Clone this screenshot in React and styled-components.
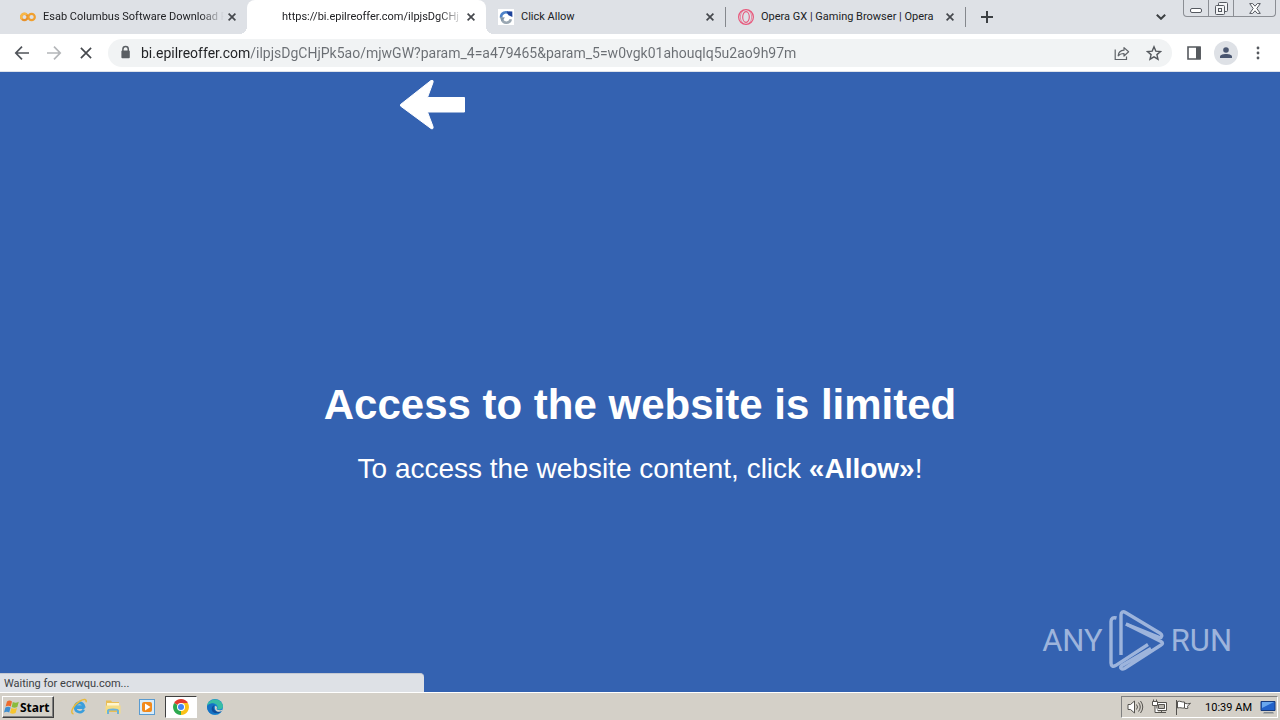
import React, { useState } from "react";
import styled, { createGlobalStyle } from "styled-components";

const GlobalStyle = createGlobalStyle`
  * {
    box-sizing: border-box;
  }

  body {
    margin: 0;
    font-family: Roboto, sans-serif;
    font-size: 11px;
    color: #202124;
  }

  button {
    font: inherit;
    color: inherit;
    padding: 0;
    border: none;
    background: none;
  }

  svg {
    display: block;
    flex: none;
  }
`;

const Screen = styled.div`
  display: flex;
  flex-direction: column;
  min-height: 100vh;
`;

// --- TAB STRIP ---

const TabStrip = styled.header`
  display: flex;
  align-items: flex-start;
  height: 34px;
  padding: 0 4px 0 8px;
  background: #dee1e6;
`;

const Tab = styled.div`
  position: relative;
  display: flex;
  align-items: center;
  flex: 0 1 239px;
  min-width: 0;
  height: 34px;
  padding: 0 7px 0 12px;
  border-radius: 8px 8px 0 0;
  background: ${(props) => (props.$active ? "#ffffff" : "transparent")};

  /* Rounded feet that join the open tab to the toolbar */
  &::before,
  &::after {
    content: "";
    display: ${(props) => (props.$active ? "block" : "none")};
    position: absolute;
    bottom: 0;
    width: 8px;
    height: 8px;
  }

  &::before {
    right: 100%;
    background: radial-gradient(circle at 0 0, transparent 8px, #ffffff 8px);
  }

  &::after {
    left: 100%;
    background: radial-gradient(circle at 100% 0, transparent 8px, #ffffff 8px);
  }
`;

const TabButton = styled.button`
  display: flex;
  align-items: center;
  gap: 7px;
  flex: 1;
  min-width: 0;
  height: 34px;
`;

const TabIcon = styled.span`
  width: 16px;
  height: 16px;
  flex: none;
`;

const TabTitle = styled.span`
  flex: 1;
  overflow: hidden;
  white-space: nowrap;
  text-align: left;
  line-height: 16px;
  mask-image: ${(props) =>
    props.$fade ? "linear-gradient(to left, transparent, #000 24px)" : "none"};
`;

const IconButton = styled.button`
  display: grid;
  place-items: center;
  flex: none;
  width: ${(props) => props.$size || 16}px;
  height: ${(props) => props.$size || 16}px;
  border-radius: 50%;
  background: ${(props) => props.$fill || "transparent"};
`;

const Divider = styled.span`
  width: 1px;
  height: 20px;
  margin-top: 7px;
  background: #85888d;
`;

const NewTab = styled(IconButton)`
  margin: 3px auto 0 7px;
`;

const TabSearch = styled(IconButton)`
  margin: 3px 8px 0 0;
`;

const WindowButtons = styled.div`
  display: flex;
  height: 17px;
  border: 1px solid #8b8e94;
  border-top: none;
  border-radius: 0 0 4px 4px;
`;

const WindowButton = styled.button`
  display: grid;
  place-items: center;
  width: ${(props) => props.$width}px;
  border-right: 1px solid #8b8e94;

  &:last-child {
    border-right: none;
  }
`;

// --- TOOLBAR ---

const Toolbar = styled.nav`
  display: flex;
  align-items: center;
  height: 38px;
  padding: 0 10px;
  border-bottom: 1px solid #dfe3ea;
  background: #ffffff;
`;

const NavGroup = styled.div`
  display: flex;
  gap: 8px;
  margin-right: 10px;
`;

const AddressBar = styled.label`
  display: flex;
  align-items: center;
  flex: 1;
  gap: 8px;
  height: 28px;
  padding: 0 6px 0 10px;
  border-radius: 14px;
  background: #f1f3f4;
`;

/* The host name is dark, the rest of the address is grey */
const AddressInput = styled.input`
  flex: 1;
  min-width: 0;
  padding: 0;
  border: none;
  outline: none;
  font: 14px Roboto, sans-serif;
  color: transparent;
  background: linear-gradient(90deg, #202124 109px, #6a6e73 109px);
  background-clip: text;
`;

const ToolGroup = styled.div`
  display: flex;
  gap: 8px;
  margin-left: 10px;
`;

// --- PAGE ---

const Page = styled.main`
  position: relative;
  flex: 1;
  display: flex;
  flex-direction: column;
  color: #ffffff;
  background: #3462b1;
  font-family: "Liberation Sans", sans-serif;
`;

const ArrowRow = styled.div`
  padding: 8px 0 0 400px;
`;

const Message = styled.section`
  flex: 1;
  display: flex;
  flex-direction: column;
  align-items: center;
  justify-content: center;
  gap: 24px;
  padding-top: 41px;
  text-align: center;
`;

const Heading = styled.h1`
  margin: 0;
  font-size: 42px;
  line-height: 48px;
`;

const Lead = styled.p`
  margin: 0;
  font-size: 28px;
  line-height: 32px;
`;

const StatusBubble = styled.div`
  position: absolute;
  left: 0;
  bottom: 0;
  width: 424px;
  height: 19px;
  padding-left: 4px;
  border-top: 1px solid #c3c8d2;
  border-radius: 0 4px 0 0;
  font: 11px/20px Roboto, sans-serif;
  color: #3c4043;
  background: #dee1e6;
`;

const Watermark = styled.div`
  position: absolute;
  right: 48px;
  bottom: 20px;
  display: flex;
  align-items: center;
  gap: 6px;
  font: 31px/62px Roboto, sans-serif;
  color: #9db4dc;
`;

// --- TASKBAR ---

const Taskbar = styled.footer`
  display: flex;
  align-items: center;
  height: 28px;
  padding: 1px 2px 0;
  border-top: 1px solid #ffffff;
  background: #d4d0c8;
`;

const StartButton = styled.button`
  display: flex;
  align-items: center;
  width: 52px;
  height: 22px;
  padding-left: 1px;
  border: 1px solid;
  border-color: #ffffff #404040 #404040 #ffffff;
  box-shadow: inset -1px -1px #808080;
  font: 700 12px "Noto Sans", sans-serif;
  color: #000000;
`;

const TaskList = styled.div`
  display: flex;
  gap: 2px;
  flex: 1;
  margin-left: 9px;
`;

const TaskButton = styled.button`
  display: grid;
  place-items: center;
  width: 32px;
  height: 22px;
  border: 1px solid;
  border-color: ${(props) =>
    props.$active ? "#404040 #ffffff #ffffff #404040" : "transparent"};
  background: ${(props) => (props.$active ? "#ffffff" : "none")};
`;

const Tray = styled.div`
  display: flex;
  align-items: center;
  gap: 7px;
  height: 22px;
  padding: 0 1px 0 5px;
  border: 1px solid;
  border-color: #808080 #ffffff #ffffff #808080;
  color: #000000;
`;

const Clock = styled.time`
  margin: 0 1px 0 6px;
`;

// --- ICONS ---

const Cross = ({ size = 8, width = 1.7 }) => (
  <svg width={size} height={size} viewBox="0 0 8 8">
    <path d="M.6.6 7.4 7.4M7.4.6.6 7.4" stroke="#45484d" strokeWidth={width} />
  </svg>
);

const ColabIcon = () => (
  <svg width="16" height="16" viewBox="0 0 16 16" fill="none" strokeWidth="2.2">
    <circle cx="4.4" cy="8" r="3.2" stroke="#e8912b" />
    <circle cx="11.6" cy="8" r="3.2" stroke="#f0a030" />
    <path d="M6.7 5.7A3.2 3.2 0 0 0 2 10.2" stroke="#f8b848" />
  </svg>
);

const SpinIcon = () => (
  <svg width="16" height="16" viewBox="0 0 16 16" fill="none">
    <path d="M0 0h16v16H0z" fill="#fff" />
    <path d="M3 8.5C3 3.5 8 2 11 4.5" stroke="#4f83c9" strokeWidth="2.6" />
    <path d="M8.5 2.2 14.3 2.6 14.4 8 10.5 6.2z" fill="#1d439c" />
    <path d="M4 10a4.5 4.5 0 0 0 8.8.3" stroke="#9aa7b2" strokeWidth="2.6" />
    <path d="m1.8 8 5.2.4-3.4 4z" fill="#8296aa" />
  </svg>
);

const OperaIcon = () => (
  <svg width="16" height="16" viewBox="0 0 16 16" fill="none" stroke="#e8577b">
    <circle cx="8" cy="8" r="7.4" strokeWidth="1.2" />
    <ellipse cx="8" cy="8" rx="3.3" ry="5.4" strokeWidth="1.1" />
    <path d="M5.8 1.4C1.2 3.8 1.2 12.2 5.8 14.6M10.2 1.4c4.6 2.4 4.6 10.8 0 13.2" opacity=".6" />
  </svg>
);

const ArrowIcon = ({ flip, color }) => (
  <svg width="16" height="16" viewBox="0 0 16 16" fill="none" stroke={color} strokeWidth="1.7">
    <path d={flip ? "M1 8h13M8 1.6 14.2 8 8 14.4" : "M15 8H2M8 1.6 1.8 8 8 14.4"} />
  </svg>
);

const LockIcon = () => (
  <svg width="15" height="16" viewBox="0 0 15 16">
    <path d="M4.9 6V4.2a2.7 2.7 0 0 1 5.4 0V6" fill="none" stroke="#5a5e63" strokeWidth="1.5" />
    <rect x="3.4" y="5.6" width="8.4" height="7.6" rx="1" fill="#5a5e63" />
  </svg>
);

const ShareIcon = () => (
  <svg width="16" height="16" viewBox="0 0 16 16" fill="none" stroke="#5f6368" strokeWidth="1.2">
    <path d="M1.2 4.5v10h11.3v-3" />
    <path d="M4.2 10.8c.3-3.6 2.3-5.4 5.8-5.6V2.6l4.6 4.2L10 11V8.5c-2.7 0-4.5.6-5.8 2.3z" strokeLinejoin="round" />
  </svg>
);

const StarIcon = () => (
  <svg width="16" height="16" viewBox="0 0 16 16">
    <path
      d="m8 1.8 1.8 4.3 4.7.4-3.6 3.1 1.1 4.6L8 11.8l-4 2.4 1.1-4.6L1.5 6.5l4.7-.4z"
      fill="none"
      stroke="#55595e"
      strokeWidth="1.4"
    />
  </svg>
);

const PanelIcon = () => (
  <svg width="14" height="14" viewBox="0 0 14 14">
    <path d="M1 1h12v12H1z" fill="none" stroke="#55595e" strokeWidth="1.6" />
    <path d="M9 1h4.8v12H9z" fill="#55595e" />
  </svg>
);

const PersonIcon = () => (
  <svg width="14" height="14" viewBox="0 0 14 14" fill="#4a5670">
    <circle cx="7" cy="4" r="2.8" />
    <path d="M1 12v-1.2C1 8.8 4 8 7 8s6 .8 6 2.8V12z" />
  </svg>
);

const DotsIcon = () => (
  <svg width="4" height="14" viewBox="0 0 4 14" fill="#55595e">
    <circle cx="2" cy="2" r="1.4" />
    <circle cx="2" cy="7" r="1.4" />
    <circle cx="2" cy="12" r="1.4" />
  </svg>
);

const MinimizeIcon = () => (
  <svg width="12" height="12" viewBox="0 0 12 12">
    <rect x=".5" y="6.5" width="11" height="4" rx="1.5" fill="#fff" stroke="#555960" />
  </svg>
);

const RestoreIcon = () => (
  <svg width="13" height="13" viewBox="0 0 13 13" fill="#f3f4f6" stroke="#555960">
    <rect x="3.5" y=".5" width="9" height="9" rx="1" />
    <rect x=".5" y="3.5" width="9" height="9" rx="1" />
    <rect x="3.5" y="6.5" width="3" height="3" />
  </svg>
);

const CloseIcon = () => (
  <svg width="12" height="11" viewBox="0 0 12 11">
    <path
      d="M.7.6h3L6 3.2 8.3.6h3L7.8 5.5l3.5 4.9h-3L6 7.8l-2.3 2.6h-3l3.5-4.9z"
      fill="#fff"
      stroke="#555960"
    />
  </svg>
);

const BigArrow = () => (
  <svg width="66" height="52" viewBox="1 1 66 52">
    <path
      d="M1.5 25.5 32 1.5c1.5-1 2.5 0 2 2L28.5 18.5H65.5v14.5H28.5l5.5 14.5c.5 2-.5 3-2 2L1.5 27z"
      fill="#fff"
      stroke="#fff"
      strokeLinejoin="round"
    />
  </svg>
);

const PlayLogo = () => (
  <svg
    width="56"
    height="62"
    viewBox="0 0 56 62"
    fill="none"
    stroke="#9db4dc"
    strokeWidth="3.4"
    strokeLinejoin="round"
  >
    <path d="M7.5 8C4 7 2 8.5 2 11.5V53c0 3 2 4 4.5 2.6L39 34.5" />
    <path d="M12 45V5c0-3 2-4 4.5-2.5l35 21c2 1.5 1.5 4.5-1 4L17 14" />
    <path d="m17 14 35 17.500c2 1.200 2 2.300 0 3.500L15.500 58.500c-3 1.600-5-1-3-2.800L42 38.500" />
  </svg>
);

const WindowsLogo = () => (
  <svg width="16" height="16" viewBox="0 0 16 16">
    <path d="M3 2.5C5 1 6.5 1.5 8 2.5L6.8 7.5C5 6.5 3.5 6.5 1.6 7.5z" fill="#ed6b2d" />
    <path d="M8.8 3c2 1 3.7 1 6-.2L13.3 8c-2 1-3.7 1-5.6 0z" fill="#8abb3c" />
    <path d="M1.4 8.5c2-1 3.5-1 5.2 0L5.2 13.5C3.5 12.5 2 12.5 0 13.5z" fill="#3e8ed0" />
    <path d="M7.4 9c2 1 3.7 1 5.6 0l-1.4 5c-2 1-3.7 1-5.6 0z" fill="#f7c52f" />
  </svg>
);

const ExplorerIcon = () => (
  <svg width="18" height="18" viewBox="0 0 18 18" fill="none">
    <path d="M14.5 9.8H5.2a4.5 4.5 0 0 0 8.6 1.7M5 8.5a4.6 4.6 0 0 1 9 0z" stroke="#3a9edc" strokeWidth="2.6" />
    <path d="M3.5 16C-1 15 4 6.5 10 3c4-2.3 7-2 6 1.2" stroke="#e8b93c" strokeWidth="1.5" />
  </svg>
);

const FolderIcon = () => (
  <svg width="18" height="18" viewBox="0 0 18 18">
    <path d="M2 4V2.5h5l1 1.5h7v10H2z" fill="#e9bd55" />
    <path d="M3 5h12v3H3z" fill="#fff5cb" />
    <path d="M1.5 7.5h15v8h-3v-4h-9v4h-3z" fill="#f5dc83" />
    <path d="M4 16v-3.5c0-1.5 10-1.5 10 0V16" fill="none" stroke="#69b3dc" strokeWidth="2" />
  </svg>
);

const MediaIcon = () => (
  <svg width="18" height="18" viewBox="0 0 18 18">
    <rect x="1.5" y="1.5" width="15" height="15" fill="#d7ecfb" stroke="#5a9bd0" />
    <rect x="4" y="4" width="10" height="10" rx="2" fill="#f28a1b" />
    <path d="m7 5.5 5.5 3.5L7 12.5z" fill="#fff" />
  </svg>
);

const ChromeIcon = () => (
  <svg width="16" height="16" viewBox="0 0 16 16">
    <path d="M8 8 1.1 4A8 8 0 0 1 14.9 4z" fill="#e33b2e" />
    <path d="M8 8 14.9 4A8 8 0 0 1 8 16z" fill="#fbc116" />
    <path d="M8 8v8A8 8 0 0 1 1.1 4z" fill="#2da94f" />
    <path d="M8 4h6.9L8 16l3.5-6z" fill="#fbc116" />
    <circle cx="8" cy="8" r="4" fill="#fff" />
    <circle cx="8" cy="8" r="3" fill="#4285f4" />
  </svg>
);

const EdgeIcon = () => (
  <svg width="16" height="16" viewBox="0 0 16 16">
    <circle cx="8" cy="8" r="8" fill="#1684d0" />
    <path d="M0 7C1-1 14-2 16 7c0 3-3 4-6 3 2-3-1-6-4-5.5S1 6 0 7z" fill="#38bda5" />
    <path d="M0 7c3-4 8-3 8-1-3 1-4 6 0 9C3 16 0 12 0 7z" fill="#1672c4" />
    <path d="M8 6c-2.5 2-1.5 6 3 6.5 2 .2 3-.5 4-1-2.5 4-9 3.5-10 0C4 9 5.5 6.5 8 6z" fill="#104c99" />
    <path d="M8 7c2 0 2.5 1.5 1.5 3 1 1.5 5 1.5 6 .5L15 12c-4 2-8 0-7-5z" fill="#d4d0c8" />
  </svg>
);

const SpeakerIcon = () => (
  <svg width="17" height="16" viewBox="0 0 17 16" fill="none" stroke="#55534f">
    <path d="M1 5.5h2.5L7.5 2v12l-4-3.5H1z" fill="#fff" />
    <path d="M9.5 5.5q2 2.5 0 5M11.5 3.5q3.5 4.5 0 9M13.5 2q4.5 6 0 12" />
  </svg>
);

const NetworkIcon = () => (
  <svg width="17" height="16" viewBox="0 0 17 16" fill="#fff" stroke="#55534f">
    <path d="M6 3.5h9.5v8H6z" />
    <path d="M7.5 5.5h6v4h-6z" fill="#b9b6af" />
    <path d="M1.5 2.5h5v4h-5zM2.5.5v2M5.5.5v2M4 6.5v7h3.5M7 13.5h8M10.5 12v2" />
  </svg>
);

const FlagIcon = () => (
  <svg width="17" height="16" viewBox="0 0 17 16" fill="#fff" stroke="#55534f">
    <path d="M1.5 1v15" />
    <path d="M2.5 2.5c3-1 4 1 7 .5v6c-3 .5-4-1-7 0zM9.500 4c2 1 4 1 6 .2l-3 3 .5 2c-1.500.5-2.500.5-3.500 0" />
  </svg>
);

const DesktopIcon = () => (
  <svg width="16" height="16" viewBox="0 0 16 16">
    <path d="M1 2.5h14v9H1z" fill="#2262c9" stroke="#163b7e" />
    <path d="M2 3h12L2 9z" fill="#68a7ee" />
    <path d="M4 13h9l1 1.5H3z" fill="#82898f" />
  </svg>
);

// --- DATA ---

const tabs = [
  { title: "Esab Columbus Software Download F", icon: <ColabIcon />, fade: true },
  { title: "https://bi.epilreoffer.com/ilpjsDgCHj", icon: null, fade: true },
  { title: "Click Allow", icon: <SpinIcon /> },
  { title: "Opera GX | Gaming Browser | Opera", icon: <OperaIcon /> },
];

const tasks = [
  { name: "Internet Explorer", icon: <ExplorerIcon /> },
  { name: "Windows Explorer", icon: <FolderIcon /> },
  { name: "Media Player", icon: <MediaIcon /> },
  { name: "Chrome", icon: <ChromeIcon /> },
  { name: "Edge", icon: <EdgeIcon /> },
];

function BrowserTab({ tab, active, onSelect }) {
  return (
    <Tab $active={active}>
      <TabButton onClick={onSelect}>
        <TabIcon>{tab.icon}</TabIcon>
        <TabTitle $fade={tab.fade}>{tab.title}</TabTitle>
      </TabButton>
      <IconButton aria-label="Close tab">
        <Cross />
      </IconButton>
    </Tab>
  );
}

function App() {
  const [current, setCurrent] = useState(1);
  const [address, setAddress] = useState(
    "bi.epilreoffer.com/ilpjsDgCHjPk5ao/mjwGW?param_4=a479465&param_5=w0vgk01ahouqlq5u2ao9h97m"
  );

  return (
    <Screen>
      <GlobalStyle />
      <TabStrip>
        {tabs.map((tab, i) => (
          <React.Fragment key={tab.title}>
            <BrowserTab tab={tab} active={i === current} onSelect={() => setCurrent(i)} />
            {i > current && <Divider />}
          </React.Fragment>
        ))}
        <NewTab $size={28} aria-label="New tab">
          <svg width="12" height="12" viewBox="0 0 12 12">
            <path d="M6 0v12M0 6h12" stroke="#3c4043" strokeWidth="2" />
          </svg>
        </NewTab>
        <TabSearch $size={28} aria-label="Search tabs">
          <svg width="10" height="6" viewBox="0 0 10 6">
            <path d="m.8.8 4.2 4L9.2.8" fill="none" stroke="#3c4043" strokeWidth="2" />
          </svg>
        </TabSearch>
        <WindowButtons>
          <WindowButton $width={25} aria-label="Minimize">
            <MinimizeIcon />
          </WindowButton>
          <WindowButton $width={25} aria-label="Restore">
            <RestoreIcon />
          </WindowButton>
          <WindowButton $width={41} aria-label="Close">
            <CloseIcon />
          </WindowButton>
        </WindowButtons>
      </TabStrip>

      <Toolbar>
        <NavGroup>
          <IconButton $size={24} aria-label="Back">
            <ArrowIcon color="#50545a" />
          </IconButton>
          <IconButton $size={24} aria-label="Forward">
            <ArrowIcon flip color="#b4b6b9" />
          </IconButton>
          <IconButton $size={24} aria-label="Stop">
            <Cross size={12} width={1.1} />
          </IconButton>
        </NavGroup>
        <AddressBar>
          <LockIcon />
          <AddressInput
            aria-label="Address"
            value={address}
            onChange={(e) => setAddress(e.target.value)}
          />
          <IconButton $size={24} aria-label="Share">
            <ShareIcon />
          </IconButton>
          <IconButton $size={24} aria-label="Bookmark">
            <StarIcon />
          </IconButton>
        </AddressBar>
        <ToolGroup>
          <IconButton $size={24} aria-label="Side panel">
            <PanelIcon />
          </IconButton>
          <IconButton $size={24} $fill="#dee1e6" aria-label="Profile">
            <PersonIcon />
          </IconButton>
          <IconButton $size={24} aria-label="Menu">
            <DotsIcon />
          </IconButton>
        </ToolGroup>
      </Toolbar>

      <Page>
        <ArrowRow>
          <BigArrow />
        </ArrowRow>
        <Message>
          <Heading>Access to the website is limited</Heading>
          <Lead>
            To access the website content, click <strong>«Allow»</strong>!
          </Lead>
        </Message>
        <Watermark>
          <span>ANY</span>
          <PlayLogo />
          <span>RUN</span>
        </Watermark>
        <StatusBubble>Waiting for ecrwqu.com...</StatusBubble>
      </Page>

      <Taskbar>
        <StartButton>
          <WindowsLogo />
          Start
        </StartButton>
        <TaskList>
          {tasks.map((task) => (
            <TaskButton key={task.name} $active={task.name === "Chrome"} aria-label={task.name}>
              {task.icon}
            </TaskButton>
          ))}
        </TaskList>
        <Tray>
          <SpeakerIcon />
          <NetworkIcon />
          <FlagIcon />
          <Clock>10:39 AM</Clock>
          <DesktopIcon />
        </Tray>
      </Taskbar>
    </Screen>
  );
}

export default App;
